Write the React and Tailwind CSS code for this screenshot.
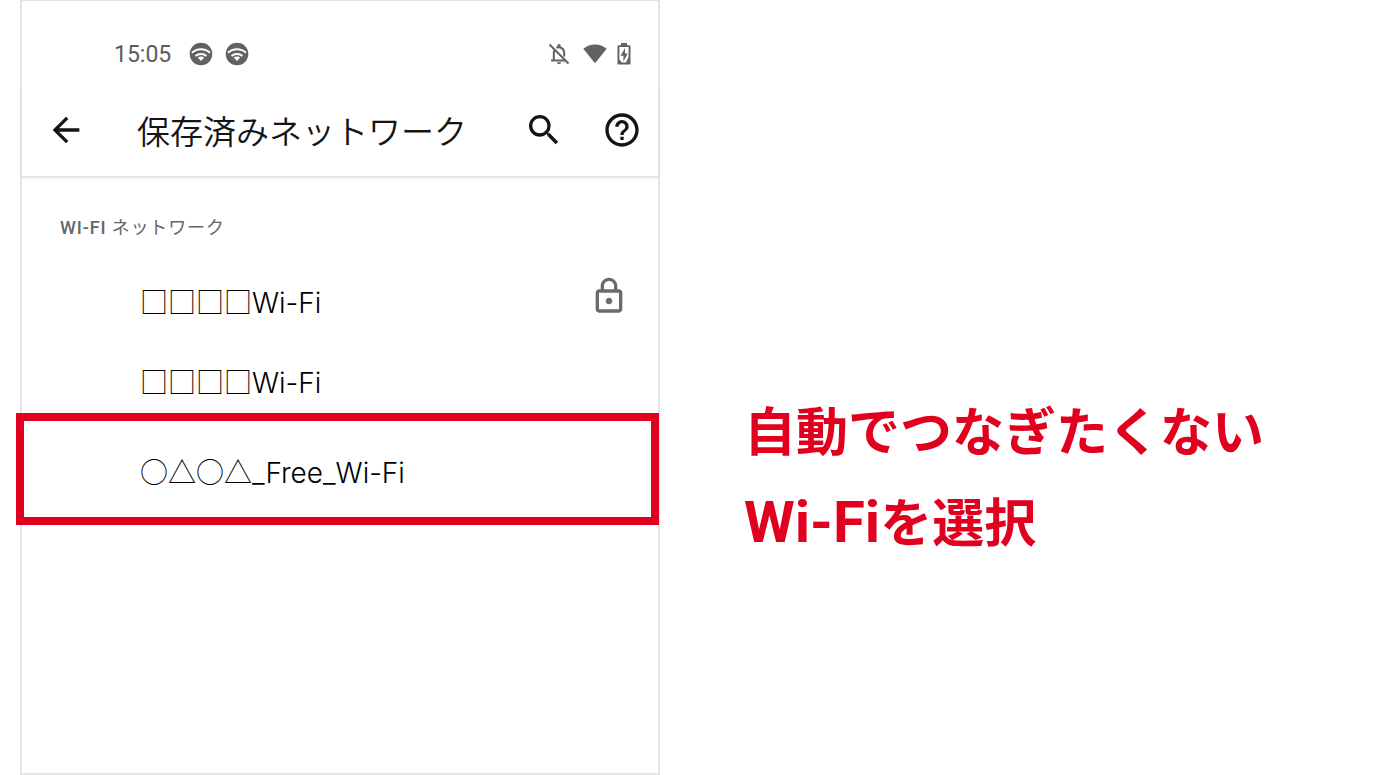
import {
  MdArrowBack,
  MdHelpOutline,
  MdOutlineLock,
  MdSearch,
} from "react-icons/md";

const networks = [
  { mask: "□□□□", name: "Wi-Fi", secured: true },
  { mask: "□□□□", name: "Wi-Fi", secured: false },
];

function WifiBadgeIcon() {
  return (
    <svg viewBox="0 0 24 24" className="size-6" aria-hidden>
      <circle cx="12" cy="12" r="11.3" fill="#626262" />
      <g fill="none" stroke="#fff" strokeWidth="2">
        <path d="M3 10.8C8 6 16 6 21 10.8" />
        <path d="M6.5 14.1C9.5 11.3 14.5 11.3 17.5 14.1" />
      </g>
      <path d="M8.8 15.6C10.6 14 13.4 14 15.2 15.6L12 18.9Z" fill="#fff" />
    </svg>
  );
}

function BellOffIcon() {
  return (
    <svg viewBox="0 0 24 24" className="size-6" fill="none" aria-hidden>
      <g stroke="#626262" strokeWidth="2">
        <path d="M2.5 2.5L21.5 21.5" />
        <path d="M4 18.5H18M6.8 18.5V11.2C6.8 9.8 7 8.8 7.6 7.9" />
        <path d="M9.4 5.9C13 4.2 17.2 6.6 17.2 11V14.5" />
      </g>
      <path d="M10.3 5.5V3.7a1.7 1.7 0 0 1 3.4 0v1.8ZM10 20.3h4a2 2 0 0 1-4 0Z" fill="#626262" />
    </svg>
  );
}

function WifiIcon() {
  return (
    <svg viewBox="0 0 24 20" className="h-5 w-6" fill="#626262" aria-hidden>
      <path d="M0.3 4.8C7-1.1 17-1.1 23.7 4.8L12 19.3Z" />
    </svg>
  );
}

function BatteryIcon() {
  return (
    <svg viewBox="0 0 14 22" className="h-[22px] w-3.5" aria-hidden>
      <path
        d="M4 0h6v2.2h2.2q1.3 0 1.3 1.3v16.7q0 1.3-1.3 1.3H1.8q-1.3 0-1.3-1.3V3.5q0-1.3 1.3-1.3H4Z"
        fill="#626262"
      />
      <path d="M2.4 4.1h9.2v10L9 19.4H5L2.4 16.5Z" fill="#fff" />
      <path d="M8 5L3.5 12.8H6.4V18.4L10.8 10.4H8Z" fill="#626262" />
    </svg>
  );
}

function StatusBar() {
  return (
    <div className="flex h-14 items-center pr-[27px] pl-[92px] text-[#5c5c5c]">
      <span className="pt-0.5 font-[Roboto,sans-serif] text-[23px]">15:05</span>
      <div className="ml-[18px] flex gap-3">
        <WifiBadgeIcon />
        <WifiBadgeIcon />
      </div>
      <div className="ml-auto flex items-center">
        <BellOffIcon />
        <span className="ml-3">
          <WifiIcon />
        </span>
        <span className="ml-2.5">
          <BatteryIcon />
        </span>
      </div>
    </div>
  );
}

function AppBar() {
  return (
    <header className="flex h-24 items-center border-b-2 border-[#e4e4e4] pt-0.5 pr-4 pl-6 text-[#141414] shadow-[0_2px_4px_#0000000a]">
      <button aria-label="戻る">
        <MdArrowBack className="size-10" />
      </button>
      <h1 className="ml-[51px] pt-0.5 text-[33px] font-[350] whitespace-nowrap">保存済みネットワーク</h1>
      <button className="ml-auto" aria-label="検索">
        <MdSearch className="size-10" />
      </button>
      <button className="ml-[38px]" aria-label="ヘルプ">
        <MdHelpOutline className="size-10" />
      </button>
    </header>
  );
}

function NetworkName({ mask, name }) {
  return (
    <span>
      {mask}
      <span className="font-[Inter,sans-serif]">{name}</span>
    </span>
  );
}

export default function App() {
  return (
    <main className="grid min-h-screen grid-cols-[32fr_37fr] bg-white pl-5 font-['Noto_Sans_CJK_JP',sans-serif]">
      <section className="border-2 border-t border-[#e4e4e4] pt-[25px]">
        <StatusBar />
        <AppBar />
        <h2 className="pt-[34px] pb-5 pl-[38px] text-lg leading-7 tracking-wider text-[#666666]">
          <span className="font-[Roboto,sans-serif] font-medium">WI-FI</span> ネットワーク
        </h2>
        <ul className="text-[28px] font-light text-black">
          {networks.map((network, index) => (
            <li key={index}>
              <button className="flex h-20 w-full items-center pr-[29px] pl-[118px]">
                <NetworkName mask={network.mask} name={network.name} />
                {network.secured && (
                  <MdOutlineLock className="mb-3 ml-auto size-10 text-[#6b6b6b]" aria-label="保護" />
                )}
              </button>
            </li>
          ))}
          <li className="relative -mt-[9px] -mr-px -ml-1.5">
            <button className="flex h-28 w-full items-center border-8 border-[#e2001f] bg-white pt-1.5 pl-[116px]">
              <NetworkName mask="○△○△" name="_Free_Wi-Fi" />
            </button>
          </li>
        </ul>
      </section>
      <p className="pt-[383px] pl-[84px] text-[52px] leading-[91px] font-bold text-[#e2001f]">
        自動でつなぎたくない
        <br />
        <span className="font-[Roboto,sans-serif] text-[58px]">Wi-Fi</span>を選択
      </p>
    </main>
  );
}
